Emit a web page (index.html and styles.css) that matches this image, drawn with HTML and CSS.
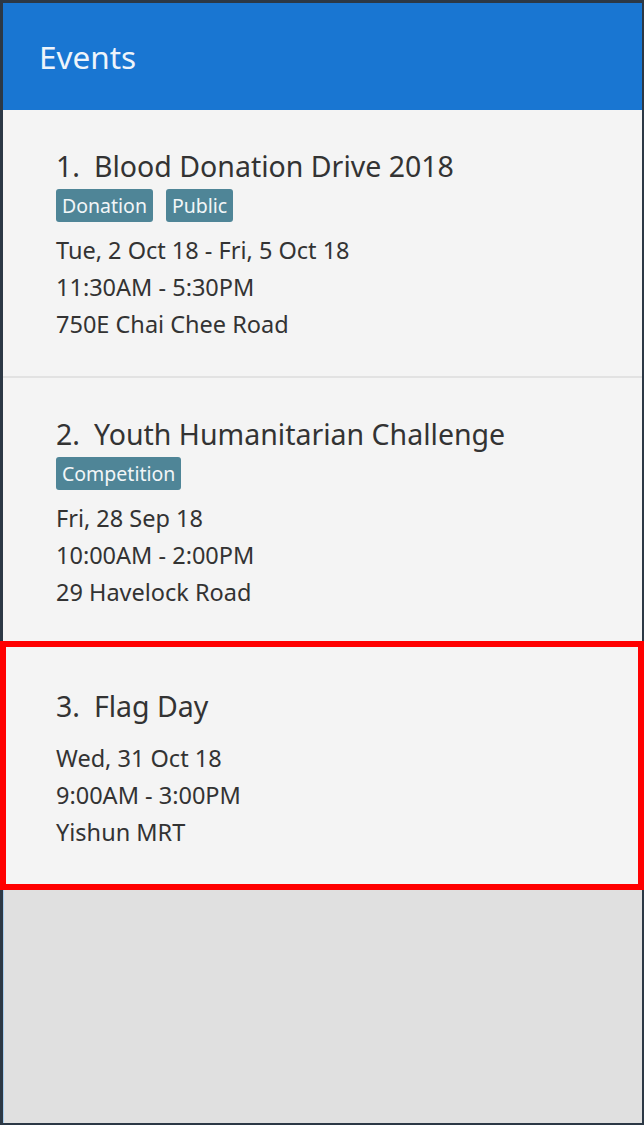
FILE: index.html
```html
<!DOCTYPE html>
<html>
<head>
<meta charset="utf-8">
<link rel="stylesheet" href="styles.css">
</head>
<body>
<div class="window">
  <div class="inner">
    <header class="header"><h1 class="header-title">Events</h1></header>
    <ul class="event-list">
      <li class="card">
        <div class="card-title"><span class="num">1.</span>Blood Donation Drive 2018</div>
        <div class="tags"><span class="tag">Donation</span><span class="tag">Public</span></div>
        <div class="details">
          <div class="line">Tue, 2 Oct 18 - Fri, 5 Oct 18</div>
          <div class="line">11:30AM - 5:30PM</div>
          <div class="line">750E Chai Chee Road</div>
        </div>
      </li>
      <li class="card">
        <div class="card-title"><span class="num">2.</span>Youth Humanitarian Challenge</div>
        <div class="tags"><span class="tag">Competition</span></div>
        <div class="details">
          <div class="line">Fri, 28 Sep 18</div>
          <div class="line">10:00AM - 2:00PM</div>
          <div class="line">29 Havelock Road</div>
        </div>
      </li>
      <li class="card selected">
        <div class="card-title"><span class="num">3.</span>Flag Day</div>
        <div class="details">
          <div class="line">Wed, 31 Oct 18</div>
          <div class="line">9:00AM - 3:00PM</div>
          <div class="line">Yishun MRT</div>
        </div>
      </li>
    </ul>
  </div>
</div>
</body>
</html>
```

FILE: styles.css
```css
* { box-sizing: border-box; }
html, body { margin: 0; padding: 0; }
body {
  font-family: "Noto Sans", "Open Sans", sans-serif;
  background: #e0e0e0;
}
.window {
  width: 644px;
  height: 1125px;
  border-style: solid;
  border-color: #2c3845;
  border-width: 3px 2px 2px 3px;
  background: #e0e0e0;
}
.inner {
  height: 100%;
  box-shadow: inset 1px 0 0 #a9cdec;
  display: flex;
  flex-direction: column;
}
.header {
  height: 107px;
  background: #1976d2;
  display: flex;
  align-items: center;
  padding-left: 36px;
  flex: none;
}
.header-title {
  margin: 0;
  font-weight: 400;
  font-size: 31.5px;
  color: #eef4fb;
}
.event-list {
  list-style: none;
  margin: 0;
  padding: 0;
}
.card {
  background: #f4f4f4;
  padding: 36px 20px 33px 53px;
  border-bottom: 2px solid #e2e2e2;
  color: #333333;
}
.card.selected {
  position: relative;
  padding-top: 40px;
  border-bottom: none;
  padding-bottom: 36px;
}
.card.selected::after {
  content: "";
  position: absolute;
  left: -3px;
  right: -2px;
  top: -5px;
  bottom: -3px;
  border: 6px solid #ff0000;
  pointer-events: none;
}
.card-title {
  font-size: 28.5px;
  line-height: 40px;
  height: 40px;
  margin-bottom: 3px;
  color: #333333;
  white-space: nowrap;
}
.num { margin-right: 14px; }
.tags {
  display: flex;
  gap: 13px;
  margin-top: 2px;
}
.tag {
  background: #4f8597;
  color: #f2f6f8;
  font-size: 19.5px;
  line-height: 33px;
  height: 33px;
  padding: 0 6px;
  border-radius: 3px;
}
.details { margin-top: 10px; }
.card-title + .details { margin-top: 14px; }
.line {
  font-size: 23.5px;
  line-height: 37px;
  height: 37px;
  color: #333333;
  white-space: nowrap;
}
```
